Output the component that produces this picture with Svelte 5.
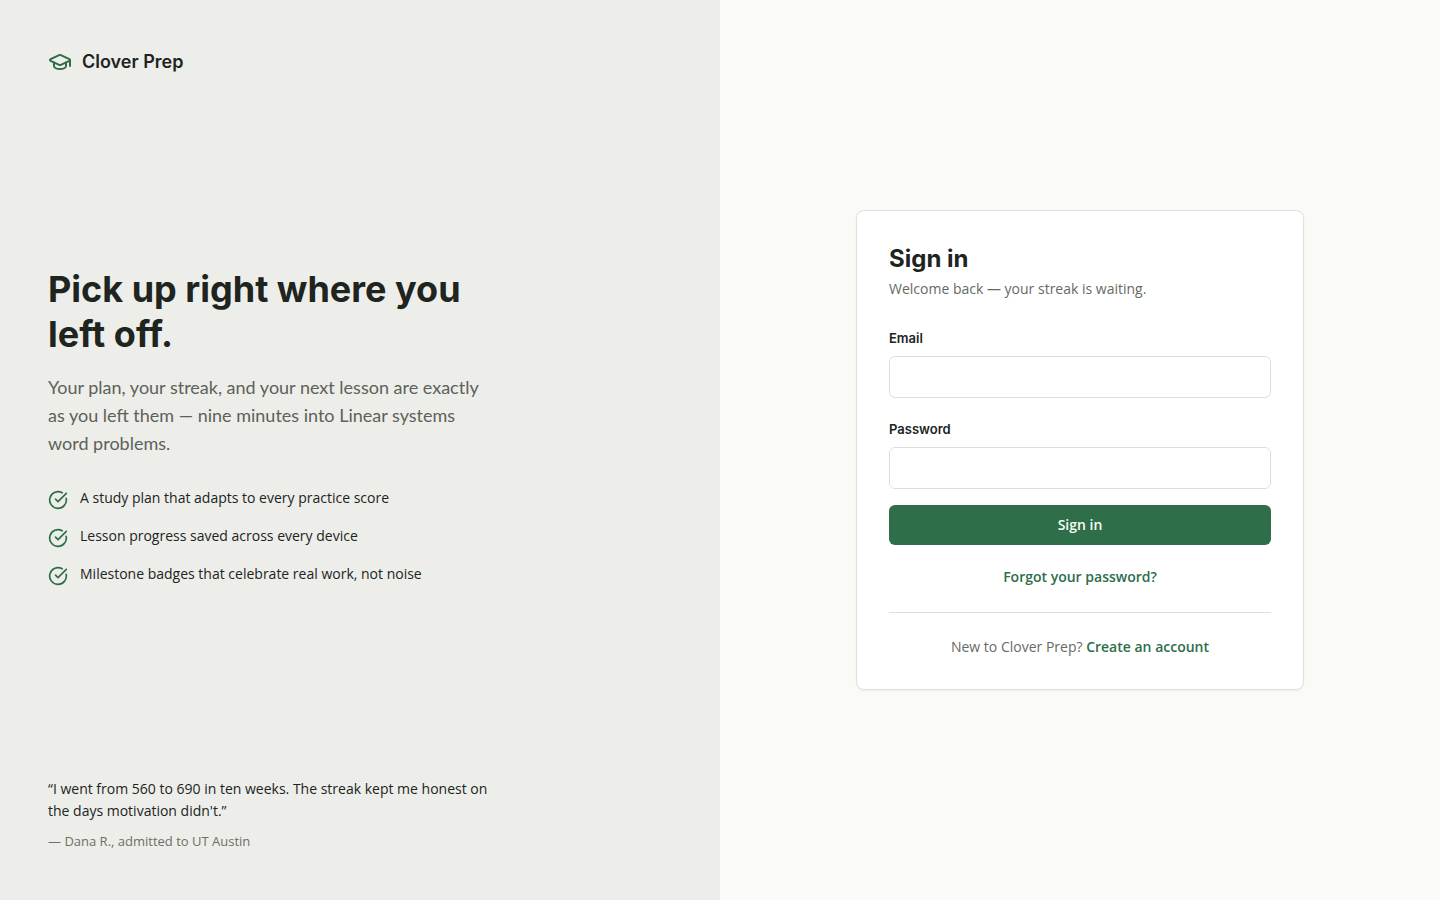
<script lang="ts">
	let email = $state('');
	let password = $state('');

	const features = [
		'A study plan that adapts to every practice score',
		'Lesson progress saved across every device',
		'Milestone badges that celebrate real work, not noise'
	];

	function handleSubmit(e: SubmitEvent) {
		e.preventDefault();
	}
</script>

<div class="page">
	<aside class="intro">
		<a class="brand" href="/">
			<svg class="logo" viewBox="0 0 24 24" aria-hidden="true">
				<path
					d="M21.42 10.922a1 1 0 0 0-.019-1.838L12.83 5.18a2 2 0 0 0-1.66 0L2.6 9.08a1 1 0 0 0 0 1.832l8.57 3.908a2 2 0 0 0 1.66 0z"
				/>
				<path d="M22 10v6" />
				<path d="M6 12.5V16a6 3 0 0 0 12 0v-3.5" />
			</svg>
			<span>Clover Prep</span>
		</a>

		<div class="pitch">
			<h1>Pick up right where you left off.</h1>
			<p class="lead">
				Your plan, your streak, and your next lesson are exactly as you left them — nine minutes
				into Linear systems word problems.
			</p>
			<ul class="features">
				{#each features as feature}
					<li>
						<svg class="check" viewBox="0 0 24 24" aria-hidden="true">
							<path d="M21.801 10A10 10 0 1 1 17 3.335" />
							<path d="m9 11 3 3L22 4" />
						</svg>
						<span>{feature}</span>
					</li>
				{/each}
			</ul>
		</div>

		<figure class="quote">
			<blockquote>
				“I went from 560 to 690 in ten weeks. The streak kept me honest on the days motivation
				didn't.”
			</blockquote>
			<figcaption>— Dana R., admitted to UT Austin</figcaption>
		</figure>
	</aside>

	<main class="panel">
		<section class="card">
			<h2>Sign in</h2>
			<p class="subtitle">Welcome back — your streak is waiting.</p>

			<form onsubmit={handleSubmit}>
				<div class="field">
					<label for="email">Email</label>
					<input type="email" id="email" bind:value={email} autocomplete="email" required />
				</div>
				<div class="field">
					<label for="password">Password</label>
					<input
						type="password"
						id="password"
						bind:value={password}
						autocomplete="current-password"
						required
					/>
				</div>
				<button type="submit">Sign in</button>
			</form>

			<p class="forgot"><a href="/forgot-password">Forgot your password?</a></p>
			<p class="signup">New to Clover Prep? <a href="/signup">Create an account</a></p>
		</section>
	</main>
</div>

<style>
	:global(body) {
		margin: 0;
		background: #fafbf6;
	}

	.page {
		display: grid;
		grid-template-columns: 1fr 1fr;
		min-height: 100vh;
		font-family: 'Open Sans', 'Liberation Sans', sans-serif;
		font-size: 14px;
		line-height: 22px;
		color: #20241f;
	}

	h1,
	h2,
	p,
	ul,
	figure,
	blockquote {
		margin: 0;
	}

	svg {
		flex: none;
		fill: none;
		stroke: #2d6e49;
		stroke-width: 2;
		stroke-linecap: round;
		stroke-linejoin: round;
	}

	.intro {
		display: flex;
		flex-direction: column;
		justify-content: space-between;
		padding: 48px;
		background: #edeee9;
	}

	.brand,
	h1,
	h2,
	label {
		font-family: Inter, 'Liberation Sans', sans-serif;
	}

	.brand {
		display: flex;
		align-items: center;
		align-self: flex-start;
		gap: 10px;
		font-size: 18px;
		font-weight: 600;
		line-height: 28px;
		color: inherit;
		text-decoration: none;
	}

	.logo {
		width: 24px;
		height: 24px;
	}

	.pitch,
	.quote {
		max-width: 448px;
	}

	.pitch {
		padding-bottom: 1px;
	}

	h1 {
		font-size: 36px;
		font-weight: 700;
		line-height: 45px;
	}

	.lead {
		margin-top: 16px;
		font-family: Lato, 'Liberation Sans', sans-serif;
		font-size: 18px;
		line-height: 28px;
		color: #5d615a;
	}

	.features {
		display: flex;
		flex-direction: column;
		gap: 15px;
		margin-top: 30px;
		padding: 0;
		list-style: none;
	}

	.features li {
		display: flex;
		align-items: flex-start;
		gap: 12px;
	}

	.check {
		width: 20px;
		height: 20px;
		margin-top: 3px;
	}

	.quote figcaption {
		margin-top: 8px;
		font-size: 13px;
		color: #6b6f68;
	}

	.panel {
		display: flex;
		align-items: center;
		justify-content: center;
		padding: 48px;
	}

	.card {
		box-sizing: border-box;
		width: 100%;
		max-width: 448px;
		padding: 32px;
		background: #fff;
		border: 1px solid #e0e2dc;
		border-radius: 8px;
		box-shadow: 0 1px 2px rgba(0, 0, 0, 0.05);
	}

	h2 {
		font-size: 24px;
		font-weight: 700;
		line-height: 32px;
	}

	.subtitle {
		margin-top: 2px;
		line-height: 24px;
		color: #666a63;
	}

	form {
		display: flex;
		flex-direction: column;
		margin-top: 28px;
	}

	.field {
		display: flex;
		flex-direction: column;
		gap: 8px;
	}

	.field + .field {
		margin-top: 22px;
	}

	label {
		font-size: 13px;
		font-weight: 600;
		line-height: 19px;
	}

	input {
		box-sizing: border-box;
		width: 100%;
		height: 42px;
		padding: 8px 12px;
		font: inherit;
		color: inherit;
		background: #fff;
		border: 1px solid #dddfdd;
		border-radius: 6px;
	}

	input:focus {
		outline: 2px solid #2d6e49;
	}

	button {
		height: 40px;
		margin-top: 16px;
		padding: 0 16px;
		font: inherit;
		font-weight: 600;
		color: #fafbf6;
		background: #2e6f49;
		border: none;
		border-radius: 6px;
		cursor: pointer;
	}

	.card a {
		font-weight: 600;
		color: #2d6e49;
		text-decoration: none;
	}

	.card a:hover {
		text-decoration: underline;
	}

	.forgot {
		margin-top: 20px;
		line-height: 23px;
		text-align: center;
	}

	.signup {
		margin-top: 24px;
		padding-top: 24px;
		line-height: 20px;
		text-align: center;
		color: #666a63;
		border-top: 1px solid #dddfdd;
	}

	@media (max-width: 800px) {
		.page {
			grid-template-columns: 1fr;
		}

		.intro {
			gap: 48px;
		}
	}
</style>
